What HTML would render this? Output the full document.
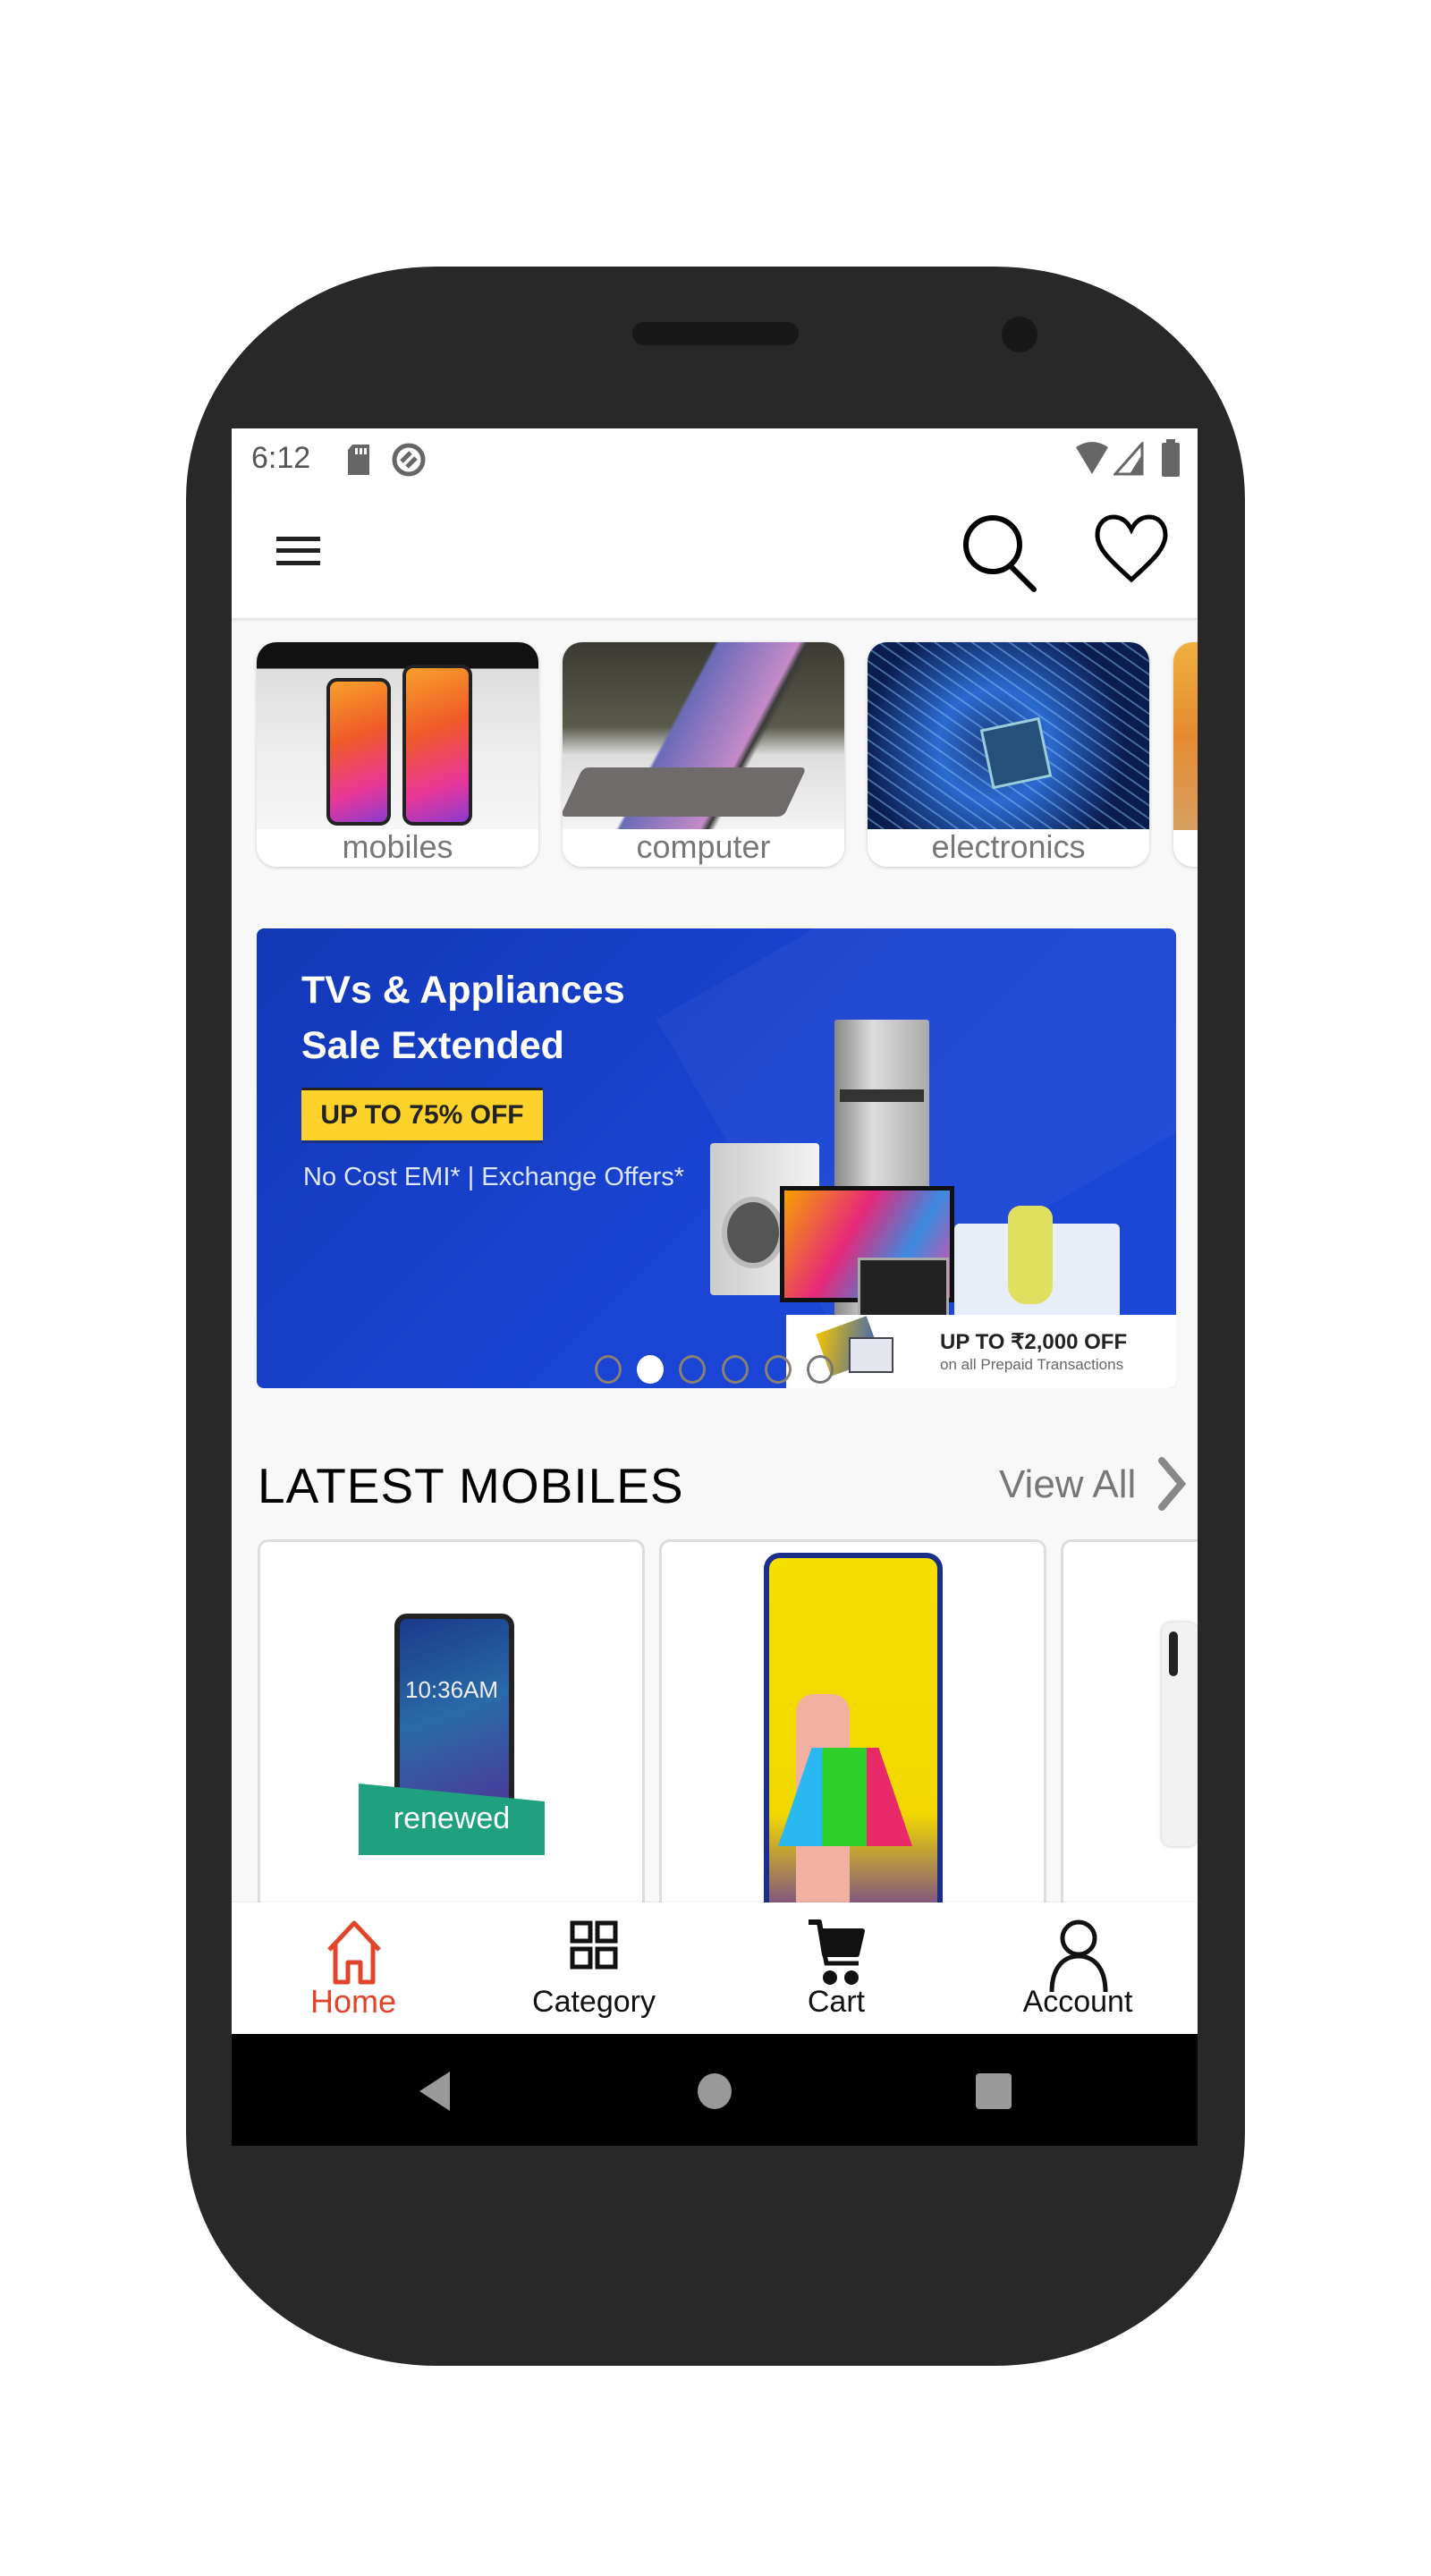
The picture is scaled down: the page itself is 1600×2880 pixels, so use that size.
<!DOCTYPE html>
<html><head><meta charset="utf-8"><style>
*{margin:0;padding:0;box-sizing:border-box}
body{width:1600px;height:2880px;background:#fff;position:relative;overflow:hidden;font-family:"Liberation Sans",sans-serif}
.a{position:absolute}
.phone{left:208px;top:298px;width:1184px;height:2347px;background:#282828;border-radius:280px/260px}
.screen{left:259px;top:479px;width:1080px;height:1920px;background:#f8f8f8;overflow:hidden}
.card{background:#fff;border-radius:22px;box-shadow:0 1px 4px rgba(0,0,0,.18);overflow:hidden}
.lbl{position:absolute;left:0;right:0;bottom:0;height:42px;text-align:center;font-size:36px;color:#777;line-height:40px;background:#fff}
.pc{background:#fff;border:3px solid #ddd;border-radius:12px;overflow:hidden}
.nav{font-size:34px;color:#111;text-align:center;width:220px}
.dot{width:30px;height:32px;border-radius:50%;border:3px solid #8a8170;top:1036px}
</style></head><body>
<div class="a phone"></div>
<div class="a" style="left:707px;top:360px;width:186px;height:26px;background:#181818;border-radius:13px"></div>
<div class="a" style="left:1120px;top:354px;width:40px;height:40px;background:#181818;border-radius:50%"></div>
<div class="a screen">
 <div class="a" style="left:0;top:0;width:1080px;height:66px;background:#fff"></div>
 <div class="a" style="left:22px;top:14px;font-size:34px;color:#555">6:12</div>
 <svg class="a" style="left:127px;top:18px" width="30" height="34"><path d="M8 0H27V34H3V6Z" fill="#666"/><rect x="11" y="4" width="3" height="7" fill="#fff"/><rect x="16" y="4" width="3" height="7" fill="#fff"/><rect x="21" y="4" width="3" height="7" fill="#fff"/></svg>
 <svg class="a" style="left:178px;top:15px" width="40" height="40"><circle cx="20" cy="20" r="16" fill="none" stroke="#666" stroke-width="5"/><path d="M12 22 L22 12 M18 28 L28 18" stroke="#666" stroke-width="5"/></svg>
 <svg class="a" style="left:942px;top:15px" width="40" height="38"><path d="M2 6 Q20 -6 38 6 L20 36 Z" fill="#666"/></svg>
 <svg class="a" style="left:986px;top:15px" width="34" height="38"><path d="M32 2 V36 H2 Z" fill="none" stroke="#666" stroke-width="3"/><path d="M32 14 V36 H18 Z" fill="#666"/></svg>
 <svg class="a" style="left:1039px;top:12px" width="22" height="42"><rect x="6" y="0" width="10" height="5" fill="#666"/><rect x="1" y="4" width="20" height="38" rx="2" fill="#666"/></svg>
 <div class="a" style="left:0;top:66px;width:1080px;height:146px;background:#fff;box-shadow:0 2px 4px rgba(0,0,0,.12)"></div>
 <div class="a" style="left:50px;top:121px;width:49px;height:5px;background:#222"></div>
 <div class="a" style="left:50px;top:134px;width:49px;height:5px;background:#222"></div>
 <div class="a" style="left:50px;top:148px;width:49px;height:5px;background:#222"></div>
 <svg class="a" style="left:815px;top:94px" width="90" height="90"><circle cx="36" cy="36" r="30" fill="none" stroke="#000" stroke-width="6"/><path d="M56 60 L82 86" stroke="#000" stroke-width="6" stroke-linecap="round"/></svg>
 <svg class="a" style="left:964px;top:95px" width="90" height="80"><path d="M42 74 C20 54 4 40 4 24 C4 12 12 4 22 4 C32 4 38 10 42 18 C46 10 52 4 62 4 C72 4 80 12 80 24 C80 40 64 54 42 74 Z" fill="none" stroke="#000" stroke-width="5"/></svg>
 <div class="a card" style="left:28px;top:239px;width:315px;height:251px">
  <div class="a" style="left:0;top:0;width:315px;height:210px;background:linear-gradient(#111 0,#111 14%,#ddd 14%,#eee 60%,#f6f6f6)"></div>
  <div class="a" style="left:78px;top:40px;width:72px;height:165px;border-radius:12px;background:linear-gradient(160deg,#f7a02a,#f05a28 40%,#e8379a 75%,#8a3bd0);border:4px solid #222"></div>
  <div class="a" style="left:163px;top:25px;width:78px;height:180px;border-radius:12px;background:linear-gradient(160deg,#f7a02a,#f05a28 40%,#e8379a 75%,#8a3bd0);border:4px solid #222"></div>
  <div class="lbl">mobiles</div></div>
 <div class="a card" style="left:370px;top:239px;width:315px;height:251px">
  <div class="a" style="left:0;top:0;width:315px;height:210px;background:linear-gradient(#3b3a33,#5a5a4c 45%,#ddd 60%,#f4f4f4)"></div>
  <div class="a" style="left:0;top:0;width:315px;height:210px;background:linear-gradient(118deg,transparent 40%,#6b6bb8 41%,#c58ac8 62%,#3a3a3a 64%,transparent 66%)"></div>
  <div class="a" style="left:10px;top:140px;width:250px;height:55px;background:#6f6b6b;transform:skewX(-25deg);border-radius:6px"></div>
  <div class="lbl">computer</div></div>
 <div class="a card" style="left:711px;top:239px;width:315px;height:251px">
  <div class="a" style="left:0;top:0;width:315px;height:210px;background:radial-gradient(circle at 45% 55%,#1b3a7a 0,#2c6ad0 30%,#0a1d4f 70%)"></div>
  <div class="a" style="left:0;top:0;width:315px;height:210px;background:repeating-linear-gradient(35deg,transparent 0 10px,rgba(140,200,255,.45) 10px 12px)"></div>
  <div class="a" style="left:132px;top:90px;width:68px;height:68px;background:#25507a;border:3px solid #9cd;transform:rotate(-12deg)"></div>
  <div class="lbl">electronics</div></div>
 <div class="a card" style="left:1053px;top:239px;width:60px;height:251px"><div class="a" style="left:0;top:0;width:60px;height:210px;background:linear-gradient(#f0b040,#e68a30 50%,#d8a060)"></div></div>
 <div class="a" style="left:28px;top:559px;width:1028px;height:514px;border-radius:8px;overflow:hidden;background:linear-gradient(135deg,#1238b6,#1a44d4 55%,#1c48d8)">
  <div class="a" style="left:500px;top:-100px;width:700px;height:400px;background:rgba(255,255,255,.04);transform:rotate(-30deg)"></div>
  <div class="a" style="left:50px;top:38px;font-size:43px;color:#fff;font-weight:bold;line-height:62px">TVs &amp; Appliances<br>Sale Extended</div>
  <div class="a" style="left:50px;top:178px;width:270px;height:62px;background:#fdd22b;font-size:30px;font-weight:bold;color:#222;line-height:62px;text-align:center;box-shadow:0 3px 0 #222 inset, 0 -3px 0 #1a3080 inset">UP TO 75% OFF</div>
  <div class="a" style="left:52px;top:262px;font-size:29px;color:#dfe6ff">No Cost EMI* | Exchange Offers*</div>
  <div class="a" style="left:646px;top:102px;width:106px;height:372px;background:linear-gradient(90deg,#888,#ddd 40%,#aaa);border-radius:3px"></div>
  <div class="a" style="left:652px;top:180px;width:94px;height:14px;background:#333"></div>
  <div class="a" style="left:507px;top:240px;width:122px;height:170px;background:linear-gradient(90deg,#ccc,#f3f3f3);border-radius:4px"></div>
  <div class="a" style="left:520px;top:300px;width:70px;height:80px;border-radius:50%;background:#555;border:6px solid #bbb"></div>
  <div class="a" style="left:585px;top:288px;width:195px;height:130px;background:linear-gradient(120deg,#f8a000,#e6287a 40%,#3b8ae0 70%,#e84aa0);border:5px solid #111"></div>
  <div class="a" style="left:672px;top:368px;width:102px;height:82px;background:#222;border:3px solid #aaa"></div>
  <div class="a" style="left:780px;top:330px;width:185px;height:120px;background:#e8eef8;border-radius:6px"></div>
  <div class="a" style="left:840px;top:310px;width:50px;height:110px;background:#e0e060;border-radius:14px 14px 20px 20px"></div>
  <div class="a" style="left:592px;top:432px;width:436px;height:82px;background:#fff">
   <div class="a" style="left:40px;top:10px;width:60px;height:50px;background:linear-gradient(120deg,#f5c400,#2a5cc8);transform:rotate(-20deg)"></div>
   <div class="a" style="left:70px;top:25px;width:50px;height:40px;background:#e4e8ee;border:2px solid #445"></div>
   <div class="a" style="left:172px;top:16px;font-size:24px;font-weight:bold;color:#222">UP TO ₹2,000 OFF</div>
   <div class="a" style="left:172px;top:46px;font-size:17px;color:#666">on all Prepaid Transactions</div>
  </div>
 </div>
 <div class="a dot" style="left:406px"></div>
 <div class="a dot" style="left:453px;background:#fff;border-color:#fff"></div>
 <div class="a dot" style="left:500px"></div>
 <div class="a dot" style="left:548px"></div>
 <div class="a dot" style="left:596px"></div>
 <div class="a dot" style="left:643px;border-color:#777"></div>
 <div class="a" style="left:29px;top:1150px;font-size:55px;color:#000;letter-spacing:1px">LATEST MOBILES</div>
 <div class="a" style="left:858px;top:1156px;font-size:44px;color:#777">View All</div>
 <svg class="a" style="left:1030px;top:1146px" width="40" height="70"><path d="M10 8 L32 34 L10 60" fill="none" stroke="#888" stroke-width="8" stroke-linecap="round"/></svg>
 <div class="a pc" style="left:29px;top:1242px;width:433px;height:420px">
  <div class="a" style="left:150px;top:80px;width:134px;height:220px;background:linear-gradient(160deg,#1a3a8a,#2a6aa8 50%,#4a3a9a);border:6px solid #222;border-radius:14px"></div>
  <div class="a" style="left:162px;top:150px;font-size:26px;color:#eee">10:36AM</div>
  <div class="a" style="left:110px;top:270px;width:208px;height:80px;background:#1fa07e;clip-path:polygon(0 0,100% 25%,100% 100%,0 100%)"></div>
  <div class="a" style="left:110px;top:290px;width:208px;text-align:center;font-size:34px;color:#fff">renewed</div>
 </div>
 <div class="a pc" style="left:478px;top:1242px;width:433px;height:420px">
  <div class="a" style="left:114px;top:12px;width:200px;height:420px;border:6px solid #1a2e8a;border-radius:18px;background:linear-gradient(#f5e000,#f2d800 70%,#6a3a9a)"></div>
  <div class="a" style="left:150px;top:170px;width:60px;height:260px;background:#f1b0a0;border-radius:20px"></div>
  <div class="a" style="left:130px;top:230px;width:150px;height:110px;background:linear-gradient(90deg,#2ab8f0 33%,#2ed02a 33% 66%,#e82a6a 66%);clip-path:polygon(25% 0,75% 0,100% 100%,0 100%)"></div>
 </div>
 <div class="a pc" style="left:927px;top:1242px;width:200px;height:420px">
  <div class="a" style="left:110px;top:90px;width:40px;height:250px;background:#f2f2f2;border-radius:10px;box-shadow:0 0 4px #bbb"></div>
  <div class="a" style="left:118px;top:100px;width:10px;height:50px;background:#222;border-radius:5px"></div>
 </div>
 <div class="a" style="left:0;top:1648px;width:1080px;height:148px;background:#fff;box-shadow:0 -1px 2px rgba(0,0,0,.06)"></div>
 <svg class="a" style="left:104px;top:1667px" width="66" height="76"><path d="M5 34 L33 4 L61 34 M12 28 V70 H26 V48 H40 V70 H54 V28" fill="none" stroke="#e0442a" stroke-width="5" stroke-linejoin="round"/></svg>
 <div class="a nav" style="left:26px;top:1738px;color:#e0442a;font-size:36px">Home</div>
 <svg class="a" style="left:378px;top:1668px" width="54" height="56"><g fill="none" stroke="#111" stroke-width="5"><rect x="3" y="3" width="20" height="20"/><rect x="31" y="3" width="20" height="20"/><rect x="3" y="32" width="20" height="20"/><rect x="31" y="32" width="20" height="20"/></g></svg>
 <div class="a nav" style="left:295px;top:1740px">Category</div>
 <svg class="a" style="left:643px;top:1666px" width="66" height="80"><path d="M2 4 H14 L20 40 H56 L62 14 H14" fill="none" stroke="#111" stroke-width="6" stroke-linejoin="round"/><path d="M18 14 H62 L56 40 H22 Z" fill="#111"/><path d="M20 40 L22 50 H58" fill="none" stroke="#111" stroke-width="5"/><circle cx="26" cy="66" r="8" fill="#111"/><circle cx="50" cy="66" r="8" fill="#111"/></svg>
 <div class="a nav" style="left:566px;top:1740px">Cart</div>
 <svg class="a" style="left:913px;top:1664px" width="68" height="86"><circle cx="34" cy="24" r="18" fill="none" stroke="#111" stroke-width="5"/><path d="M4 84 C4 56 18 44 34 44 C50 44 64 56 64 84" fill="none" stroke="#111" stroke-width="5"/></svg>
 <div class="a nav" style="left:836px;top:1740px">Account</div>
 <div class="a" style="left:0;top:1795px;width:1080px;height:125px;background:#000"></div>
 <svg class="a" style="left:206px;top:1835px" width="40" height="48"><path d="M38 2 V46 L4 24 Z" fill="#999"/></svg>
 <div class="a" style="left:521px;top:1839px;width:38px;height:40px;border-radius:50%;background:#999"></div>
 <div class="a" style="left:832px;top:1839px;width:40px;height:40px;border-radius:4px;background:#999"></div>
</div>
</body></html>
